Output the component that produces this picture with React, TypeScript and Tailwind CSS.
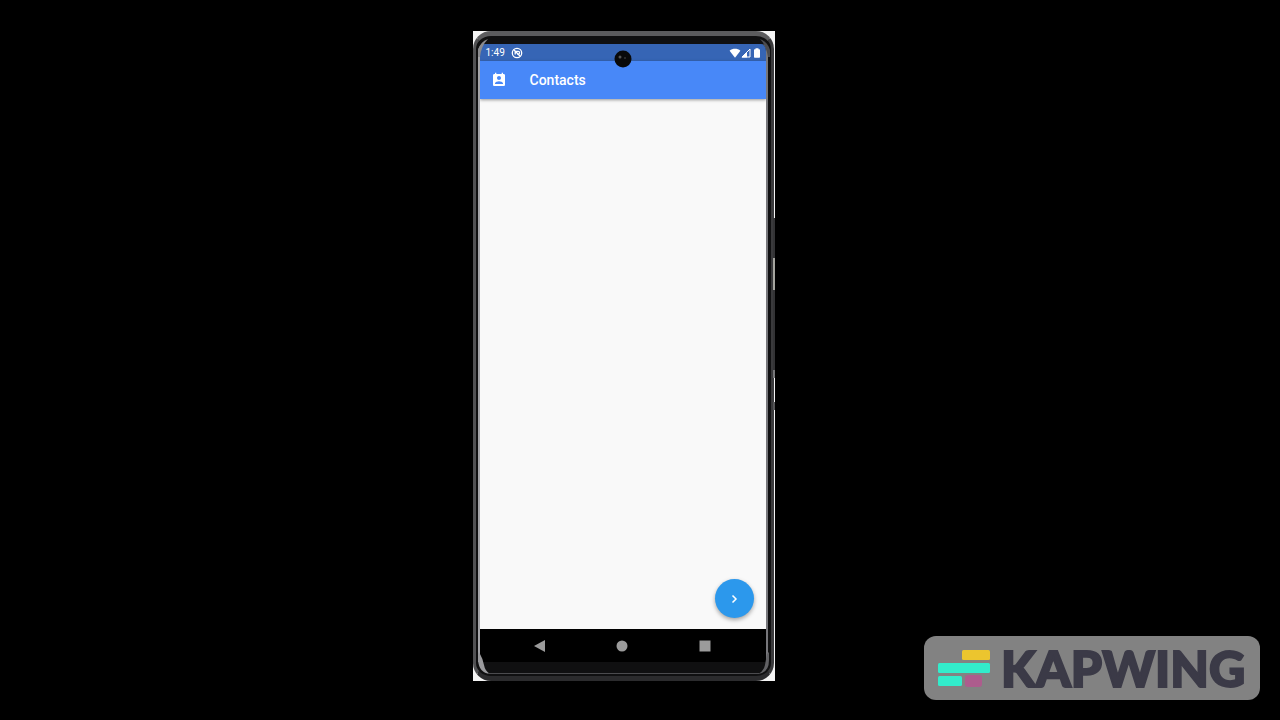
function StatusBar() {
  return (
    <div className="flex h-[17px] items-center justify-between bg-[#3665b5] pl-[6px] pr-[5px] text-white">
      <div className="flex items-center gap-[6px]">
        <span className="text-[10px] leading-4">1:49</span>
        <svg viewBox="0 0 12 12" className="size-3" fill="none" stroke="#fff" aria-hidden="true">
          <circle cx="6" cy="6" r="4.700" strokeWidth="1.300" />
          <path d="M2.800 2.800l6.400 6.400M4.200 7.500V4.400h3a1.400 1.400 0 010 2.800H6" strokeWidth="1.300" />
        </svg>
      </div>
      <div className="flex items-center">
        <svg viewBox="0 0 12 10" className="h-[10px] w-3" fill="#fff" aria-hidden="true">
          <path d="M6 9.800L.6 2.800C2.200 1.200 4 .8 6 .8s3.800.4 5.400 2z" />
        </svg>
        <svg viewBox="0 0 10 10" className="size-[10px]" aria-hidden="true">
          <path d="M9 1v8H1z" fill="none" stroke="#fff" strokeWidth="1" />
          <path d="M6 4v5.500H.5z" fill="#fff" />
        </svg>
        <svg viewBox="0 0 8 10" className="ml-[2px] h-[10px] w-2" fill="#fff" aria-hidden="true">
          <path d="M2.500 .3h3v.9h.8q.7 0 .7.7v7.200q0 .7-.7.700H1.700q-.7 0-.7-.7V1.900q0-.7.7-.7h.8z" />
        </svg>
      </div>
    </div>
  );
}

function AppBar() {
  return (
    <header className="z-10 flex h-[38px] items-center gap-[23px] bg-[#4888f8] pl-[11px] text-white shadow-[0_1px_3px_rgba(0,0,0,0.4)]">
      <svg viewBox="0 0 24 24" className="size-4" fill="#fff" aria-hidden="true">
        <path d="M19 3h-1V1h-2v2H8V1H6v2H5c-1.110 0-2 .9-2 2v14c0 1.100.89 2 2 2h14c1.100 0 2-.9 2-2V5c0-1.100-.9-2-2-2zm-7 3c1.660 0 3 1.340 3 3s-1.340 3-3 3-3-1.340-3-3 1.340-3 3-3zm6 12H6v-1c0-2 4-3.100 6-3.100s6 1.100 6 3.100v1z" />
      </svg>
      <h1 className="text-sm font-medium">Contacts</h1>
    </header>
  );
}

function NavBar() {
  return (
    <nav className="flex h-[33px] items-center justify-between bg-black pl-[54px] pr-[55px]">
      <button type="button" aria-label="Back">
        <svg viewBox="0 0 12 12" className="size-3" fill="#9b9b9b"><path d="M11 0v12L0 6z" /></svg>
      </button>
      <button type="button" aria-label="Home">
        <svg viewBox="0 0 12 12" className="size-3" fill="#9b9b9b"><circle cx="6" cy="6" r="5.500" /></svg>
      </button>
      <button type="button" aria-label="Recent apps">
        <svg viewBox="0 0 12 12" className="size-3" fill="#9b9b9b"><path d="M.5.5h11v11H.5z" /></svg>
      </button>
    </nav>
  );
}

function Phone() {
  return (
    <div className="relative flex w-[302px] max-w-full bg-[#f4f4f4] pr-[1px]">
      <div className="relative flex flex-1 flex-col rounded-[18px] border-b-[5px] border-l-[3px] border-r-[3px] border-t-[5px] border-b-[#2b2b2d] border-l-[#515153] border-r-[#3a3a3c] border-t-[#5c5c5e] bg-[#101011] pb-[14px] pl-[2px] pr-[3px] pt-2">
        <div className="flex flex-1 flex-col overflow-hidden rounded-t-[7px] border-l-2 border-r-2 border-l-[#a4a4a8] border-r-[#77777b]">
          <StatusBar />
          <AppBar />
          <main className="flex flex-1 items-end justify-end bg-[#f9f9f9] px-3 pb-[11px]">
            <button type="button" aria-label="Next" className="flex size-[39px] items-center justify-center rounded-full bg-[#2c98ec] shadow-[0_2px_4px_rgba(0,0,0,0.35)]">
              <svg viewBox="0 0 16 16" className="size-4" fill="none" stroke="#fff" strokeWidth="1.500"><path d="M6.500 4.500L10 8l-3.500 3.500" /></svg>
            </button>
          </main>
          <NavBar />
        </div>
        <svg viewBox="0 0 18 18" className="absolute left-1/2 top-[14px] z-20 size-[18px] -translate-x-1/2" aria-hidden="true">
          <circle cx="9" cy="9" r="8.500" fill="#090909" />
          <circle cx="6" cy="7" r="1.500" fill="#555" />
          <circle cx="11" cy="8" r="1" fill="#333" />
        </svg>
        <svg viewBox="0 0 12 18" className="absolute left-[2px] top-[3px] h-[18px] w-3" aria-hidden="true">
          <path d="M0 18V11Q2 3 10 0Q3 7 2 18z" fill="#8b8b8e" />
        </svg>
        <svg viewBox="0 0 12 18" className="absolute right-[1px] top-[3px] h-[18px] w-3" aria-hidden="true">
          <path d="M12 18V11Q10 3 2 0Q8 6 10 18z" fill="#4c4c4f" />
        </svg>
        <svg viewBox="0 0 12 22" className="absolute bottom-[2px] left-[2px] h-[22px] w-3" aria-hidden="true">
          <path d="M0 0l2 2Q5 7 6 13Q7 19 12 22Q1 21 0 8z" fill="#9a9a9d" />
        </svg>
        <svg viewBox="0 0 12 22" className="absolute bottom-[2px] right-[1px] h-[22px] w-3" aria-hidden="true">
          <path d="M11 0L9 2Q8 7 7 13Q6 19 0 22Q11 21 11 8z" fill="#626265" />
        </svg>
        <div className="absolute inset-x-3 bottom-[2px] h-[1px] bg-[#4b4b4e]" />
      </div>
      <div className="absolute right-0 top-[187px] h-10 w-[2px] bg-[#333335]" />
      <div className="absolute right-0 top-[227px] h-8 w-[2px] bg-[#a5a59f]" />
      <div className="absolute right-0 top-[259px] h-20 w-[2px] bg-[#333335]" />
      <div className="absolute right-0 top-[339px] h-2 w-[2px] bg-[#777779]" />
      <div className="absolute right-0 top-[371px] h-2 w-[2px] bg-[#555557]" />
    </div>
  );
}

function Watermark() {
  return (
    <div className="absolute bottom-5 right-5 flex h-16 w-[336px] items-center gap-[10px] rounded-xl bg-[#828282] pl-[14px]">
      <svg viewBox="0 0 53 38" className="h-[38px] w-[53px] shrink-0" aria-hidden="true">
        <rect x="24" y="1" width="28" height="10" rx="1.500" fill="#ecc52e" />
        <rect x="0" y="14" width="52" height="10" rx="1.500" fill="#32eccb" />
        <rect x="0" y="27" width="24" height="10" rx="1.500" fill="#32eccb" />
        <rect x="27" y="26" width="17" height="12" rx="3" fill="#ad5c8d" />
      </svg>
      <span className="font-['Lato',sans-serif] text-[50px] font-black leading-none text-[#3b3a47] [-webkit-text-stroke:2px_#3b3a47]">KAPWING</span>
    </div>
  );
}

export default function App() {
  return (
    <div className="relative flex min-h-screen justify-center bg-black pb-[39px] pr-[33px] pt-[31px] font-['Roboto',sans-serif]">
      <Phone />
      <Watermark />
    </div>
  );
}
